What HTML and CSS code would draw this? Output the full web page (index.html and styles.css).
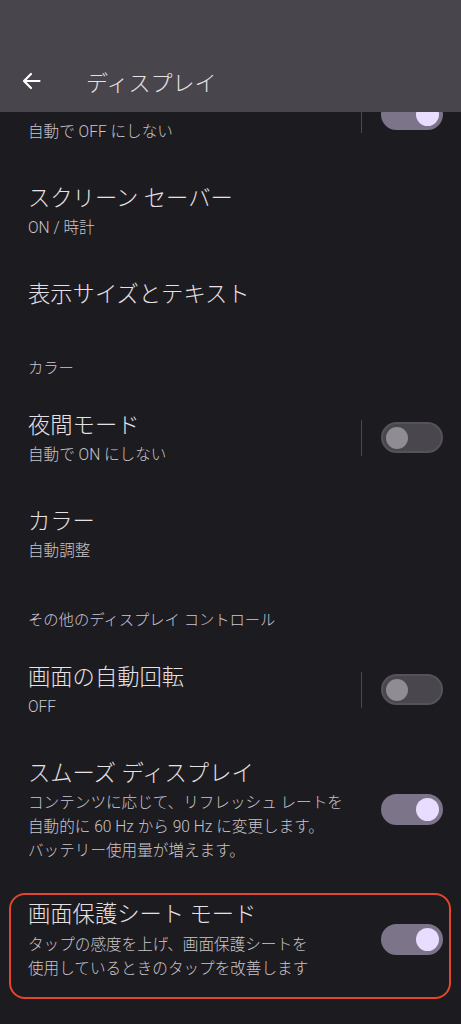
FILE: index.html
```html
<!DOCTYPE html>
<html lang="ja">
<head>
  <meta charset="UTF-8">
  <meta name="viewport" content="width=device-width, initial-scale=1">
  <title>ディスプレイ</title>
  <link rel="stylesheet" href="styles.css">
</head>
<body>
  <header class="app-bar">
    <div class="app-bar-row">
      <button class="back-btn" aria-label="戻る">
        <svg width="20" height="20" viewBox="0 0 20 20">
          <path d="M18.5 10H3.5M10 3L3 10l7 7" fill="none" stroke="#fff" stroke-width="2.2" stroke-linecap="round" stroke-linejoin="round"/>
        </svg>
      </button>
      <h1>ディスプレイ</h1>
    </div>
  </header>

  <main class="pref-list">
    <!-- scrolled: top of this row sits under the app bar -->
    <div class="pref scrolled-off">
      <div class="pref-text">
        <div class="pref-title">スクリーン アテンション</div>
        <div class="pref-summary">自動で OFF にしない</div>
      </div>
      <span class="divider"></span>
      <span class="switch on"><span class="thumb"></span></span>
    </div>

    <div class="pref">
      <div class="pref-text">
        <div class="pref-title">スクリーン セーバー</div>
        <div class="pref-summary">ON / 時計</div>
      </div>
    </div>

    <div class="pref">
      <div class="pref-text">
        <div class="pref-title">表示サイズとテキスト</div>
      </div>
    </div>

    <div class="pref-category">カラー</div>

    <div class="pref">
      <div class="pref-text">
        <div class="pref-title">夜間モード</div>
        <div class="pref-summary">自動で ON にしない</div>
      </div>
      <span class="divider"></span>
      <span class="switch"><span class="thumb"></span></span>
    </div>

    <div class="pref">
      <div class="pref-text">
        <div class="pref-title">カラー</div>
        <div class="pref-summary">自動調整</div>
      </div>
    </div>

    <div class="pref-category">その他のディスプレイ コントロール</div>

    <div class="pref">
      <div class="pref-text">
        <div class="pref-title">画面の自動回転</div>
        <div class="pref-summary">OFF</div>
      </div>
      <span class="divider"></span>
      <span class="switch"><span class="thumb"></span></span>
    </div>

    <div class="pref">
      <div class="pref-text">
        <div class="pref-title">スムーズ ディスプレイ</div>
        <div class="pref-summary">コンテンツに応じて、リフレッシュ レートを<br>自動的に 60 Hz から 90 Hz に変更します。<br>バッテリー使用量が増えます。</div>
      </div>
      <span class="switch on"><span class="thumb"></span></span>
    </div>

    <div class="pref highlighted">
      <div class="pref-text">
        <div class="pref-title">画面保護シート モード</div>
        <div class="pref-summary">タップの感度を上げ、画面保護シートを<br>使用しているときのタップを改善します</div>
      </div>
      <span class="switch on"><span class="thumb"></span></span>
    </div>
  </main>
</body>
</html>
```

FILE: styles.css
```css
body {
  margin: 0;
  background: #1c1b1f;
  color: #e6e1e5;
  font-family: Roboto, "Noto Sans CJK JP", sans-serif;
  font-weight: 300;
}
.app-bar {
  height: 112px;
  background: #48464c;
  display: flex;
  align-items: flex-end;
}
.app-bar-row {
  height: 56px;
  margin-bottom: 3px;
  display: flex;
  align-items: center;
  flex: 1;
}
.back-btn {
  background: none;
  border: none;
  padding: 0;
  margin-left: 21px;
  width: 20px;
  height: 20px;
  display: flex;
}
.app-bar h1 {
  margin: 0 0 0 45px;
  font-size: 22px;
  font-weight: 300;
  color: #e6e1e5;
}
.pref-list {
  overflow: hidden;
  padding-bottom: 24px;
}
.pref {
  display: flex;
  align-items: center;
  padding: 18.5px 18px 18.5px 28px;
  position: relative;
}
.scrolled-off {
  margin-top: -45.5px;
}
.scrolled-off .pref-title {
  visibility: hidden;
}
.pref-text {
  flex: 1;
}
.pref-title {
  font-size: 22.3px;
  line-height: 34px;
}
.pref-summary {
  margin-top: 1px;
  font-size: 15.6px;
  line-height: 24px;
  color: #c9c5cb;
}
.pref-category {
  padding: 28.5px 28px 11.5px;
  font-size: 15.3px;
  line-height: 20px;
  color: #cdc5d9;
}
.divider {
  width: 1px;
  height: 36px;
  background: #4a484e;
  margin-right: 19px;
}
.switch {
  width: 62px;
  height: 31px;
  box-sizing: border-box;
  border-radius: 16px;
  background: #49474d;
  border: 2px solid #55535a;
  display: flex;
  align-items: center;
  padding: 0 3px;
}
.switch .thumb {
  width: 22px;
  height: 22px;
  border-radius: 50%;
  background: #8f8c93;
}
.switch.on {
  background: #7c7489;
  border-color: #7c7489;
  justify-content: flex-end;
  padding: 0 2px;
}
.switch.on .thumb {
  width: 23px;
  height: 23px;
  background: #e9ddff;
}
.highlighted {
  padding-top: 15.5px;
  padding-bottom: 15.5px;
}
.highlighted .pref-summary {
  margin-top: 2px;
}
.highlighted::after {
  content: "";
  position: absolute;
  left: 9px;
  right: 10px;
  top: 11.5px;
  bottom: -2.5px;
  border: 2px solid #e5452b;
  border-radius: 16px;
}
```
